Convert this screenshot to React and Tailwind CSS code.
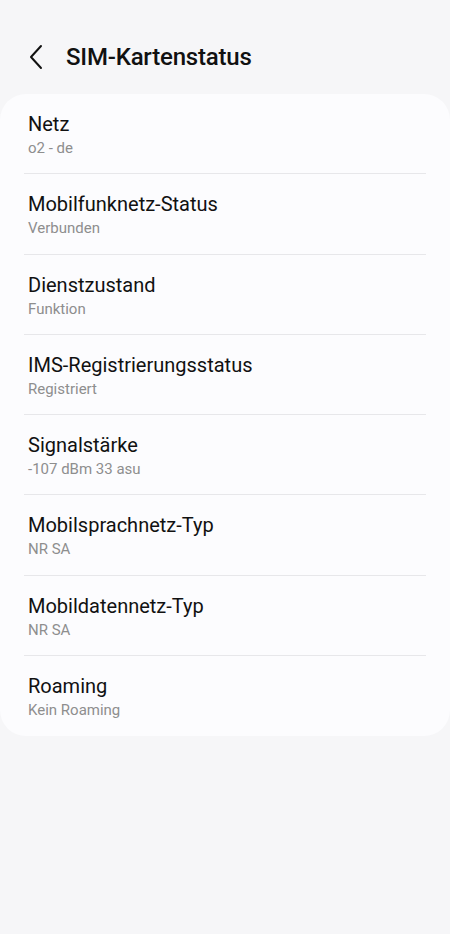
import React from "react";

const items = [
  { title: "Netz", value: "o2 - de" },
  { title: "Mobilfunknetz-Status", value: "Verbunden" },
  { title: "Dienstzustand", value: "Funktion" },
  { title: "IMS-Registrierungsstatus", value: "Registriert" },
  { title: "Signalstärke", value: "-107 dBm 33 asu" },
  { title: "Mobilsprachnetz-Typ", value: "NR SA" },
  { title: "Mobildatennetz-Typ", value: "NR SA" },
  { title: "Roaming", value: "Kein Roaming" },
];

export default function App() {
  return (
    <div
      className="min-h-[934px] w-[450px] bg-[#f6f6f8]"
      style={{ fontFamily: "Roboto, 'Noto Sans', sans-serif" }}
    >
      {/* HEADER */}
      <div className="flex items-center h-[94px] pl-[26px] pt-[20px]">
        <svg width="22" height="26" viewBox="0 0 22 26" fill="none" className="mr-[18px]">
          <path d="M15 2 L5 13 L15 24" stroke="#111" strokeWidth="2" strokeLinecap="round" strokeLinejoin="round" />
        </svg>
        <h1 className="text-[24px] font-medium text-[#111] tracking-[-0.2px]">SIM-Kartenstatus</h1>
      </div>

      {/* LIST */}
      <div className="bg-[#fcfcfe] rounded-[26px]">
        {items.map((it, i) => (
          <div key={it.title} className="px-[24px]">
            <div
              className={
                "h-[80.25px] pt-[17px] px-[4px] " +
                (i < items.length - 1 ? "border-b border-[#e7e7ea]" : "")
              }
            >
              <div className="text-[20px] leading-[26px] text-[#111]">{it.title}</div>
              <div className="mt-[1px] text-[15px] leading-[20px] text-[#8e8e8e]">{it.value}</div>
            </div>
          </div>
        ))}
      </div>
    </div>
  );
}
